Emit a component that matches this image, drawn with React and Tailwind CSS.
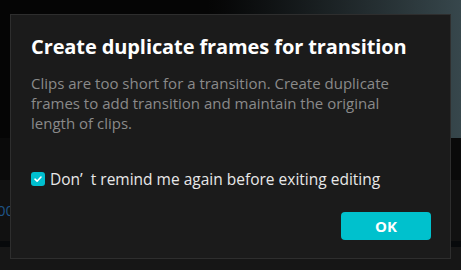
import React, { useState } from 'react';

export default function App() {
  const [noRemind, setNoRemind] = useState(true);

  return (
    <div className="relative w-[461px] h-[270px] overflow-hidden bg-[#161616]" style={{ fontFamily: '"Open Sans", "Noto Sans", sans-serif' }}>
      {/* editor behind the dialog */}
      <div className="flex flex-col h-full">
        <div className="h-[138px] bg-gradient-to-r from-[#050505] via-[#050505] via-45% to-[#37474c]" />
        <div className="h-[42px] bg-[#0a0a0a]" />
        <div className="h-[61px] bg-[#111111] flex items-center">
          <span className="-ml-[3px] text-[15px] text-[#1f5486]">00</span>
        </div>
        <div className="h-[6px] bg-[#07090b]" />
        <div className="flex-1 bg-[#161616]" />
      </div>

      {/* modal */}
      <div className="absolute left-[10px] top-[14px] w-[441px] h-[245px] bg-[#1b1b1b] border border-[#2e2e2e] flex flex-col pl-[20px] pr-[19px]">
        <h1 className="mt-[18px] text-[20px] leading-[28px] font-bold text-white tracking-[-0.1px] whitespace-nowrap">
          Create duplicate frames for transition
        </h1>
        <p className="mt-[12px] text-[15px] leading-[20px] text-[#8a8a8a] pr-[30px]">
          Clips are too short for a transition. Create duplicate frames to add transition and maintain the original length of clips.
        </p>
        <label className="mt-[36px] flex items-center gap-[5px] cursor-pointer">
          <button
            type="button"
            onClick={() => setNoRemind((v) => !v)}
            className={`w-[14px] h-[14px] rounded-[3px] flex items-center justify-center ${noRemind ? 'bg-[#00bfcf]' : 'border border-[#777]'}`}
          >
            {noRemind && (
              <svg width="10" height="10" viewBox="0 0 10 10" fill="none">
                <path d="M2 5.2L4.1 7.2L8 3" stroke="white" strokeWidth="1.6" strokeLinecap="round" strokeLinejoin="round" />
              </svg>
            )}
          </button>
          <span className="text-[15.5px] leading-[20px] text-[#e8e8e8] whitespace-nowrap">Don’&nbsp; t remind me again before exiting editing</span>
        </label>
        <div className="mt-[23px] flex justify-end">
          <button className="w-[90px] h-[28px] rounded-[4px] bg-[#00c1cd] text-white text-[15px] font-bold">OK</button>
        </div>
      </div>
    </div>
  );
}
